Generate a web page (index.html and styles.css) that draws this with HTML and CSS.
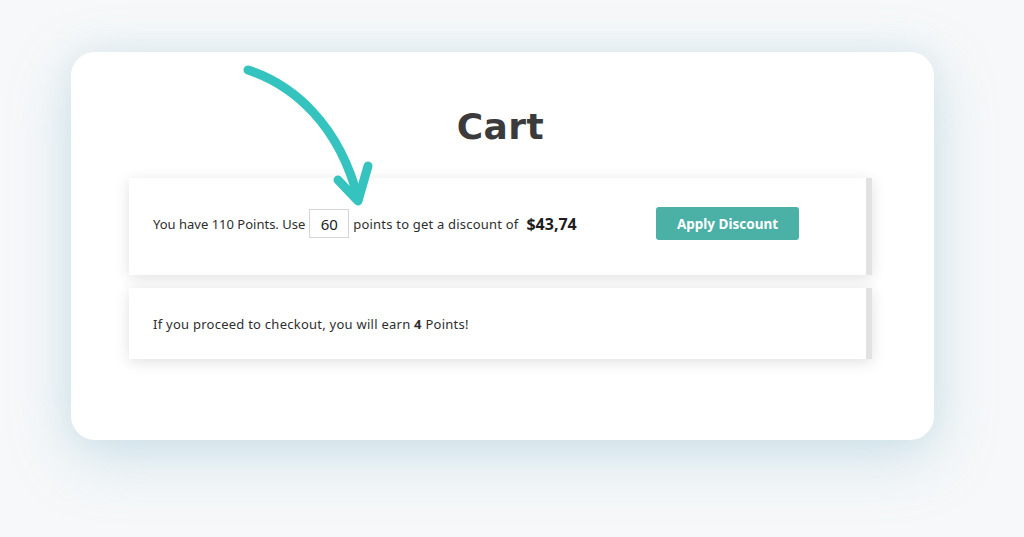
FILE: index.html
```html
<!DOCTYPE html>
<html lang="en">
<head>
<meta charset="utf-8">
<title>Cart</title>
<link rel="stylesheet" href="styles.css">
</head>
<body>
<div class="page">
  <div class="card">
    <svg class="arrow" width="140" height="170" viewBox="0 0 140 170" aria-hidden="true">
      <path d="M9 10 C 55 25, 100 65, 119 138" fill="none" stroke="#34c3be" stroke-width="9" stroke-linecap="round"/>
      <path d="M99 120 L119 141 L129 106" fill="none" stroke="#34c3be" stroke-width="9" stroke-linecap="round" stroke-linejoin="round"/>
    </svg>
    <h1 class="title">Cart</h1>
    <div class="panel panel-discount">
      <div class="row">
        <div class="points-text">
          <span>You have 110 Points. Use</span>
          <input class="points-input" type="text" value="60">
          <span class="wide">points to get a discount of</span>
          <strong class="amount">$43,74</strong>
        </div>
        <button class="apply-btn">Apply Discount</button>
      </div>
    </div>
    <div class="panel panel-earn">
      <p class="earn-text">If you proceed to checkout, you will earn <strong>4</strong> Points!</p>
    </div>
  </div>
</div>
</body>
</html>
```
FILE: styles.css
```css
html, body {
  margin: 0;
  padding: 0;
}
body {
  background: #f6f8f9;
  font-family: "Noto Sans", "DejaVu Sans", sans-serif;
  color: #2b2b2b;
  width: 1024px;
  height: 537px;
  overflow: hidden;
}
.page {
  padding: 52px 90px 0 71px;
}
.card {
  position: relative;
  width: 863px;
  height: 388px;
  box-sizing: border-box;
  background: #ffffff;
  border-radius: 24px;
  box-shadow: 0 18px 60px rgba(150, 195, 212, 0.38), 0 0 30px rgba(190, 215, 225, 0.3);
  padding: 50px 62px 0 58px;
}
.arrow {
  position: absolute;
  left: 168px;
  top: 8px;
  z-index: 2;
}
.title {
  margin: 0 0 26px 0;
  text-align: center;
  font-family: "DejaVu Sans", "Noto Sans", sans-serif;
  font-weight: 700;
  font-size: 36px;
  line-height: 50px;
  color: #3b3b3b;
  letter-spacing: 0.5px;
}
.panel {
  background: #ffffff;
  border-right: 6px solid #e2e2e2;
  box-shadow: 0 3px 14px rgba(0, 0, 0, 0.12);
  box-sizing: border-box;
  padding-left: 24px;
}
.panel-discount {
  height: 97px;
  padding-top: 29px;
}
.panel-earn {
  margin-top: 13px;
  height: 71px;
  padding-top: 28px;
}
.row {
  display: flex;
  align-items: center;
  height: 33px;
}
.points-text {
  flex: 0 0 503px;
  display: flex;
  align-items: center;
  font-size: 13px;
  color: #2e2e2e;
}
.wide {
  letter-spacing: 0.2px;
}
.points-input {
  width: 40px;
  height: 29px;
  box-sizing: border-box;
  margin: 0 4px 0 4px;
  border: 1px solid #d6d6d6;
  text-align: center;
  font-family: "Noto Sans", "DejaVu Sans", sans-serif;
  font-size: 15px;
  color: #222;
  padding: 0;
  background: #fff;
}
.amount {
  margin-left: 8px;
  font-size: 16px;
  font-weight: 700;
  color: #1e1e1e;
}
.apply-btn {
  width: 143px;
  height: 33px;
  border: none;
  border-radius: 3px;
  background: #4bb0a6;
  color: #ffffff;
  font-family: "Noto Sans", "DejaVu Sans", sans-serif;
  font-weight: 700;
  font-size: 13.5px;
  padding: 0;
}
.earn-text {
  margin: 0;
  font-size: 13px;
  letter-spacing: 0.25px;
  line-height: 17px;
  color: #2e2e2e;
}
.earn-text strong {
  font-weight: 700;
}
```
